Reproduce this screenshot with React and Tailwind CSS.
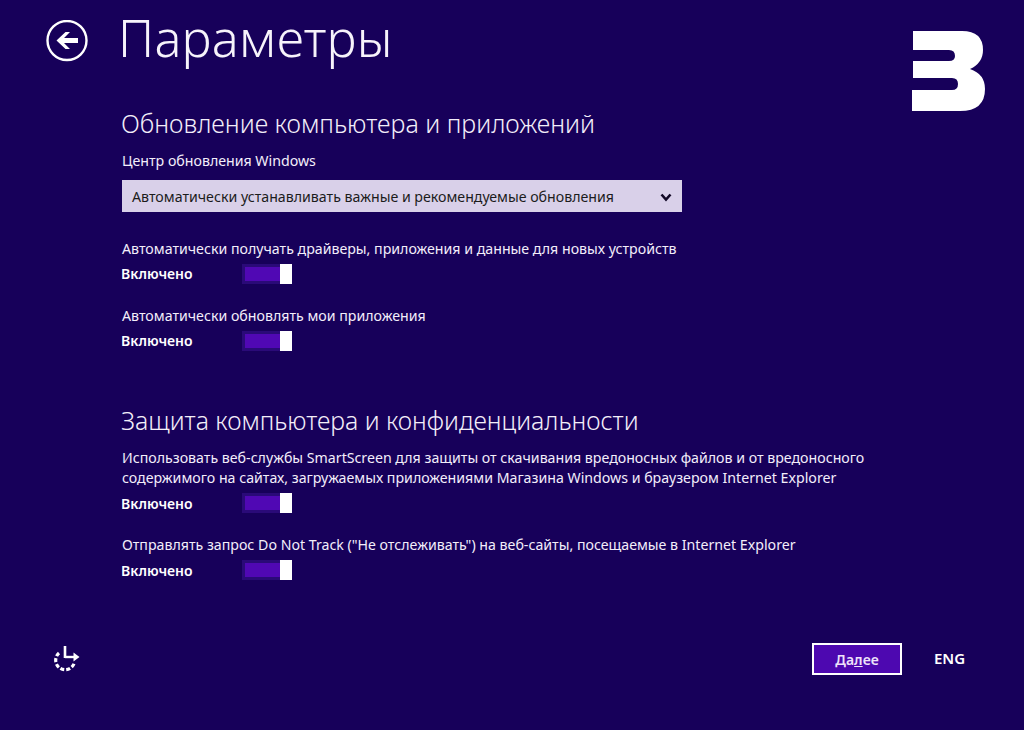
const font = { fontFamily: '"Noto Sans", "Open Sans", sans-serif' };

function Toggle({ lower }) {
  return (
    <div className={lower ? "-mt-[2px] flex h-[20px] w-[50px]" : "flex h-[20px] w-[50px]"}>
      <div className="flex h-full w-[38px] items-center bg-[#2a0a78] pl-[3px]">
        <div className="h-[14px] w-full bg-[#5008b4]" />
      </div>
      <div className="h-full w-[12px] bg-white" />
    </div>
  );
}

function Setting({ lines, className = "", lower = false }) {
  return (
    <div className={className}>
      {lines.map((l) => (
        <div key={l} className="h-[20px] text-[14.18px] leading-[20px] whitespace-nowrap text-[#f3eefa]">{l}</div>
      ))}
      <div className={lower ? "mt-[6px] flex h-[20px] items-center" : "mt-[5px] flex h-[20px] items-center"}>
        <span className="-ml-[1px] w-[121px] text-[14px] leading-[20px] font-semibold text-white">Включено</span>
        <Toggle lower={lower} />
      </div>
    </div>
  );
}

export default function App() {
  return (
    <div style={font} className="flex h-[730px] w-[1024px] flex-col overflow-hidden bg-[#17005a] text-white">
      <div className="flex h-[105px] items-start">
        <div className="w-[122px] pt-[20px] pl-[46px]">
          <svg width="42" height="42" viewBox="0 0 42 42" fill="none">
            <circle cx="21" cy="20.5" r="19.5" stroke="white" strokeWidth="2.4" />
            <path d="M10.5 20.5 L19.5 12 H24 L18 18 H32 V23 H18 L24 29 H19.5 Z" fill="white" />
          </svg>
        </div>
        <h1 className="-ml-[4px] flex-1 pt-[3px] text-[50.5px] leading-[70px] font-light tracking-[0.3px] text-[#f7f3fb]">Параметры</h1>
        <svg className="mt-[31px] mr-[39px]" width="73" height="80" viewBox="0 0 73 80" fill="white">
          <path d="M1 0 H50 Q71 0 71 19 Q71 32 58 38 Q73 43 73 58 Q73 80 48 80 H0 V59 H40 Q46 59 46 53 Q46 47 40 47 H1 V30 H37 Q43 30 43 25 Q43 19 37 19 H1 Z" />
        </svg>
      </div>

      <div className="flex flex-col pl-[122px]">
        <h2 className="-ml-[1px] h-[36px] text-[25px] leading-[36px] font-light text-[#f3eef9]">Обновление компьютера и приложений</h2>
        <div className="mt-[10px] h-[20px] text-[14.18px] leading-[20px] text-[#f3eefa]">Центр обновления Windows</div>
        <div className="mt-[9px] flex h-[32px] w-[560px] items-center justify-between bg-[#d9d0e9] pt-[2px] pr-[10px] pl-[10px] text-[14.18px] text-[#1c1c1c]">
          <span>Автоматически устанавливать важные и рекомендуемые обновления</span>
          <svg width="12" height="9" viewBox="0 0 12 9" fill="none">
            <path d="M1.5 1.5 L6 6.5 L10.5 1.5" stroke="#120826" strokeWidth="2.6" />
          </svg>
        </div>
        <Setting className="mt-[27px]" lines={["Автоматически получать драйверы, приложения и данные для новых устройств"]} />
        <Setting className="mt-[22px]" lines={["Автоматически обновлять мои приложения"]} />
        <h2 className="mt-[51px] -ml-[1px] h-[36px] text-[24.8px] leading-[36px] font-light text-[#f3eef9]">Защита компьютера и конфиденциальности</h2>
        <Setting lower className="mt-[10px]" lines={[
          "Использовать веб-службы SmartScreen для защиты от скачивания вредоносных файлов и от вредоносного",
          "содержимого на сайтах, загружаемых приложениями Магазина Windows и браузером Internet Explorer",
        ]} />
        <Setting lower className="mt-[21px]" lines={['Отправлять запрос Do Not Track ("Не отслеживать") на веб-сайты, посещаемые в Internet Explorer']} />
      </div>

      <div className="mt-[62px] flex h-[32px] items-center">
        <div className="-mt-[2px] w-[812px] pl-[53px]">
          <svg width="27" height="28" viewBox="0 0 27 28" fill="none" stroke="white" strokeWidth="3.2">
            <path d="M6 9 A9.5 9.5 0 1 0 21.5 18" strokeDasharray="4 2" />
            <path d="M12 2 V14" strokeWidth="2.6" />
            <path d="M12 13 H22" strokeWidth="2.4" />
            <path d="M20.5 8.5 L26.5 13 L20.5 17.5 Z" fill="white" stroke="none" />
          </svg>
        </div>
        <button className="h-[32px] w-[90px] border-2 border-white bg-[#4d08b0] text-[14px] font-semibold text-[#eee3fa]">
          Да<span className="underline">л</span>ее
        </button>
        <span className="-mt-[2px] ml-[32px] text-[15px] font-semibold text-white">ENG</span>
      </div>
    </div>
  );
}
